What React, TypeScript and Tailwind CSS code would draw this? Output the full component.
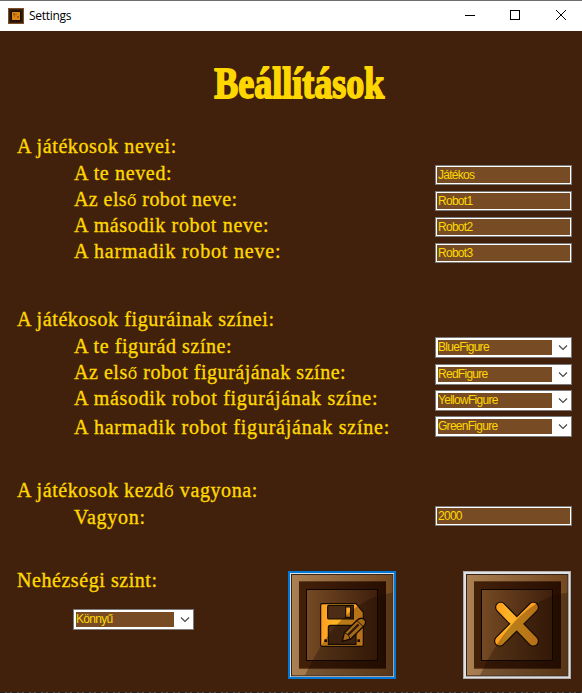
import type { ReactNode } from "react";

function Label({ text, className = "" }: { text: string; className?: string }) {
  const parts = text.split("ő");
  return (
    <span
      className={`translate-y-px whitespace-nowrap font-['Liberation_Serif',serif] text-[20px] leading-[26px] text-[#ffd700] [-webkit-text-stroke:0.35px_#ffd700] ${className}`}
    >
      {parts.map((part, i) => (
        <span key={i}>
          {i > 0 && <span className="font-['Liberation_Sans',sans-serif] text-[17px] leading-none [-webkit-text-stroke:0px]">ő</span>}
          {part}
        </span>
      ))}
    </span>
  );
}

const fieldText = "font-['Liberation_Sans',sans-serif] text-[12px] tracking-[-0.72px] text-[#ffd700] whitespace-nowrap";

function TextField({ value, className = "" }: { value: string; className?: string }) {
  return (
    <div className={`h-[20px] w-[137px] shrink-0 border border-[#7a7a7a] bg-white p-px ${className}`}>
      <div className={`h-full bg-[#774c24] pl-px leading-[16px] ${fieldText}`}>{value}</div>
    </div>
  );
}

function Select({ value, className = "w-[137px]" }: { value: string; className?: string }) {
  return (
    <div className={`flex h-[21px] shrink-0 items-center border border-[#7a7a7a] bg-white pl-[2px] ${className}`}>
      <div className={`h-[15px] flex-1 bg-[#774c24] leading-[14px] ${fieldText}`}>{value}</div>
      <svg className="ml-[6px] mr-[3px] h-[9px] w-[10px]" viewBox="0 0 10 9" fill="none" stroke="#444" strokeWidth="1.1">
        <path d="M1 2.5 L5 6.5 L9 2.5" />
      </svg>
    </div>
  );
}

function Row({ children, className = "h-[26px] items-end" }: { children: ReactNode; className?: string }) {
  return <div className={`flex justify-between pl-[74px] pr-[10px] ${className}`}>{children}</div>;
}

function Tile({ id, focused, children }: { id: string; focused?: boolean; children: ReactNode }) {
  return (
    <svg className="size-[108px] shrink-0" viewBox="24 27 324 324">
      <defs>
        <linearGradient id={`${id}-rim`} x1="0" y1="0" x2="1" y2="0">
          <stop offset="0" stopColor="#ab8052" />
          <stop offset="1" stopColor="#74481f" />
        </linearGradient>
        <linearGradient id={`${id}-groove`} x1="0" y1="0" x2="1" y2="0">
          <stop offset="0" stopColor="#432009" />
          <stop offset="1" stopColor="#280e02" />
        </linearGradient>
        <linearGradient id={`${id}-face`} x1="0" y1="0" x2="1" y2="0">
          <stop offset="0" stopColor="#754a24" />
          <stop offset="1" stopColor="#3f1f0c" />
        </linearGradient>
        <linearGradient id={`${id}-gold`} gradientUnits="userSpaceOnUse" x1="120" y1="0" x2="252" y2="0">
          <stop offset="0" stopColor="#ff9b20" />
          <stop offset="0.3" stopColor="#ffb424" />
          <stop offset="1" stopColor="#ff9b20" />
        </linearGradient>
      </defs>
      <rect x="24" y="27" width="324" height="324" fill={focused ? "#0078d7" : "#adadad"} />
      {focused ? (
        <rect x="30" y="33" width="312" height="312" fill="#e1e1e1" />
      ) : (
        <rect x="27" y="30" width="318" height="318" fill="#e1e1e1" />
      )}
      <rect x="34.5" y="37.5" width="304" height="304" fill={`url(#${id}-rim)`} stroke="#35251a" strokeWidth="3" />
      <rect x="57" y="58" width="261" height="262" fill={`url(#${id}-groove)`} />
      <rect x="79.5" y="82.5" width="213" height="213" fill={`url(#${id}-face)`} stroke="#0d0502" strokeWidth="3" />
      {children}
      <path d="M75 340 C125 235 205 108 337 92 L337 340 Z" fill="#170900" fillOpacity="0.3" />
    </svg>
  );
}

function SaveTile() {
  return (
    <Tile id="save" focused>
      <g stroke="#160b03" strokeWidth="3.5" strokeLinejoin="round">
        <path d="M127 125 H228 L250 151 V248 Q250 253 245 253 H127 Q122 253 122 248 V130 Q122 125 127 125 Z" fill="url(#save-gold)" />
        <path d="M147 130 H220 V171 H147 Q143 171 143 167 V134 Q143 130 147 130 Z" fill="#4d2c15" />
        <rect x="197" y="135" width="15" height="31" fill="url(#save-gold)" />
        <path d="M151 190 H228 V247 H145 V196 Q145 190 151 190 Z" fill="#4d2c15" />
      </g>
      <rect x="133" y="232" width="8" height="8" fill="#160b03" />
      <rect x="232" y="232" width="8" height="8" fill="#160b03" />
      <path d="M187 238 L193 212 L232 174 Q244 164 254 173 Q261 182 251 193 L212 231 Z" fill="#e79322" stroke="#160b03" strokeWidth="4" strokeLinejoin="round" />
      <path d="M193 213 Q206 215 210 231 M231 176 L249 193" fill="none" stroke="#2b1505" strokeWidth="3" />
      <path d="M204 219 L236 187" fill="none" stroke="#3c200e" strokeWidth="7" />
    </Tile>
  );
}

function CloseTile() {
  const cross = "M137 136 L235 237 M235 136 L134 237";
  return (
    <Tile id="close">
      <path d={cross} fill="none" stroke="#160b03" strokeWidth="34" strokeLinecap="round" />
      <path d={cross} fill="none" stroke="url(#close-gold)" strokeWidth="27" strokeLinecap="round" />
    </Tile>
  );
}

function TitleBar() {
  return (
    <header className="flex h-[31px] items-center border-t border-[#6e6e6e] bg-white pl-[8px]">
      <svg className="size-4" viewBox="0 0 16 16">
        <rect width="16" height="16" fill="#7b5027" />
        <rect x="1" y="1" width="14" height="14" fill="#3b1d0b" />
        <rect x="2.5" y="2.5" width="11" height="11" fill="#1f0d04" />
        <rect x="4" y="4" width="8" height="8" fill="#d98613" />
        <path d="M5 5h2v1h2v1H7v2H6V7H5zM9 8h2v2H9z" fill="#aa5f0b" />
      </svg>
      <span className="ml-[5px] flex-1 font-['Open_Sans','Noto_Sans',sans-serif] text-[12px] leading-[16px] tracking-[-0.3px] text-black">Settings</span>
      <svg className="h-[30px] w-[120px]" viewBox="462 1 120 30" fill="none" stroke="#000" strokeWidth="1">
        <path d="M465 15.5 H475" />
        <rect x="510.5" y="10.5" width="9" height="9" />
        <path d="M556 10 L566 20 M566 10 L556 20" />
      </svg>
    </header>
  );
}

export default function App() {
  return (
    <div className="flex h-[693px] w-[582px] flex-col overflow-hidden bg-[#41200c]">
      <TitleBar />
      <h1 className="flex h-[101px] justify-center pl-[16px] pt-[24px] font-['Liberation_Serif',serif] text-[45px] font-bold leading-[56px] text-[#ffd700]">
        <span className="h-[56px] scale-x-[0.8] whitespace-nowrap [-webkit-text-stroke:1.8px_#ffd700]">Beállítások</span>
      </h1>

      <section className="flex h-[173px] flex-col">
        <div className="flex h-[27px] pl-[17px]"><Label text="A játékosok nevei:" className="tracking-[0.61px]" /></div>
        <Row><Label text="A te neved:" className="tracking-[0.65px]" /><TextField value="Játékos" /></Row>
        <Row><Label text="Az első robot neve:" className="tracking-[0.42px]" /><TextField value="Robot1" /></Row>
        <Row><Label text="A második robot neve:" className="tracking-[0.65px]" /><TextField value="Robot2" /></Row>
        <Row><Label text="A harmadik robot neve:" className="tracking-[0.82px]" /><TextField value="Robot3" /></Row>
      </section>

      <section className="flex h-[171px] flex-col">
        <div className="flex h-[27px] pl-[17px]"><Label text="A játékosok figuráinak színei:" className="tracking-[0.61px]" /></div>
        <Row><Label text="A te figurád színe:" className="tracking-[0.58px]" /><Select value="BlueFigure" /></Row>
        <Row className="h-[27px] items-start"><Label text="Az első robot figurájának színe:" className="tracking-[0.54px]" /><Select value="RedFigure" className="mt-[6px] w-[137px]" /></Row>
        <Row className="h-[26px] items-start"><Label text="A második robot figurájának színe:" className="-mt-px tracking-[0.68px]" /><Select value="YellowFigure" className="mt-[5px] w-[137px]" /></Row>
        <Row className="h-[28px] items-start"><Label text="A harmadik robot figurájának színe:" className="mt-[2px] tracking-[0.78px]" /><Select value="GreenFigure" className="mt-[5px] w-[137px]" /></Row>
      </section>

      <section className="flex h-[90px] flex-col">
        <div className="flex h-[27px] pl-[17px]"><Label text="A játékosok kezdő vagyona:" className="tracking-[0.59px]" /></div>
        <Row className="h-[26px] items-center"><Label text="Vagyon:" className="tracking-[0.75px]" /><TextField value="2000" /></Row>
      </section>

      <section className="flex h-[126px] items-start">
        <div className="flex w-[288px] flex-col">
          <div className="flex h-[43px] pl-[17px]"><Label text="Nehézségi szint:" className="tracking-[0.56px]" /></div>
          <Select value="Könnyű" className="ml-[73px] w-[121px]" />
        </div>
        <div className="mt-[5px] flex gap-[67px]">
          <SaveTile />
          <CloseTile />
        </div>
      </section>

      <div className="h-px bg-[#202020] bg-[repeating-linear-gradient(90deg,#202020_0_5px,#505050_5px_7px,#292929_7px_10px,#5b5048_10px_12px)]" />
    </div>
  );
}
